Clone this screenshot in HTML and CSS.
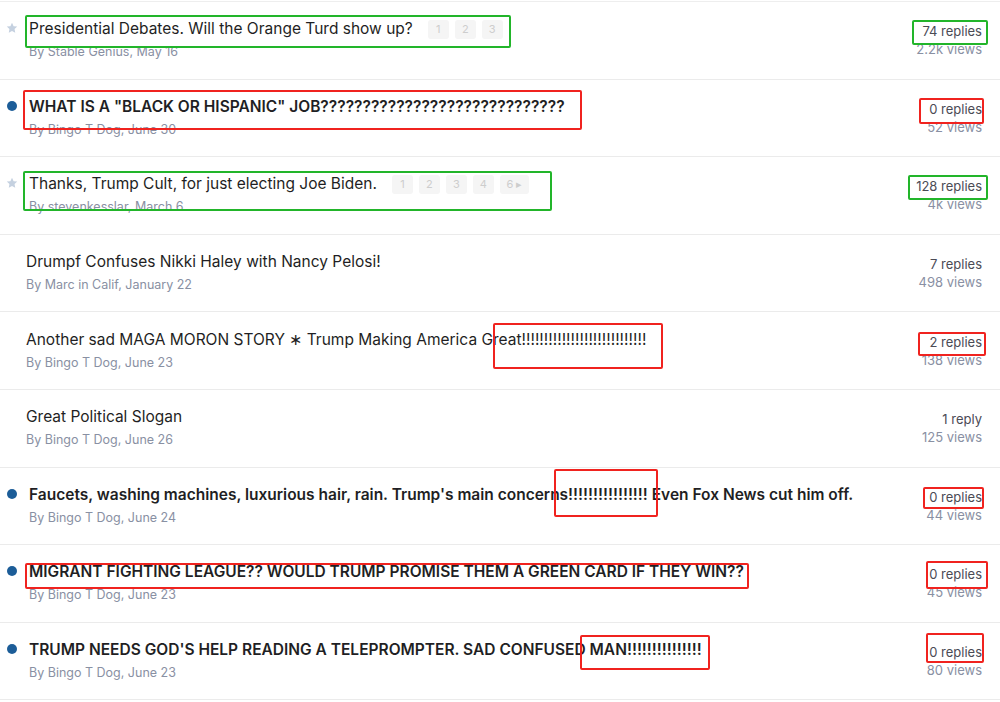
FILE: index.html
```html
<!DOCTYPE html>
<html lang="en">
<head>
    <meta charset="UTF-8">
    <meta name="viewport" content="width=device-width, initial-scale=1.0">
    <title>Topics</title>
    <link rel="stylesheet" href="styles.css">
</head>
<body>
    <div class="topic-list">
        <div class="topic">
            <span class="topic-icon"><svg class="star" viewBox="0 0 24 24"><path d="M12 1.5l3.2 6.8 7.3.9-5.4 5 1.4 7.3L12 17.9l-6.5 3.6 1.4-7.3-5.4-5 7.3-.9z"/></svg></span>
            <div class="topic-main">
                <div class="topic-title">Presidential Debates. Will the Orange Turd show up?
                    <span class="pages"><span>1</span><span>2</span><span>3</span></span>
                </div>
                <div class="topic-meta">By Stable Genius, May 16</div>
            </div>
            <div class="topic-stats"><div class="replies">74 replies</div><div class="views">2.2k views</div></div>
        </div>

        <div class="topic unread">
            <span class="topic-icon"><span class="dot"></span></span>
            <div class="topic-main">
                <div class="topic-title">WHAT IS A "BLACK OR HISPANIC" JOB?????????????????????????????</div>
                <div class="topic-meta">By Bingo T Dog, June 30</div>
            </div>
            <div class="topic-stats"><div class="replies">0 replies</div><div class="views">52 views</div></div>
        </div>

        <div class="topic">
            <span class="topic-icon"><svg class="star" viewBox="0 0 24 24"><path d="M12 1.5l3.2 6.8 7.3.9-5.4 5 1.4 7.3L12 17.9l-6.5 3.6 1.4-7.3-5.4-5 7.3-.9z"/></svg></span>
            <div class="topic-main">
                <div class="topic-title">Thanks, Trump Cult, for just electing Joe Biden.
                    <span class="pages"><span>1</span><span>2</span><span>3</span><span>4</span><span class="last">6 &#9656;</span></span>
                </div>
                <div class="topic-meta">By stevenkesslar, March 6</div>
            </div>
            <div class="topic-stats"><div class="replies">128 replies</div><div class="views">4k views</div></div>
        </div>

        <div class="topic no-icon">
            <div class="topic-main">
                <div class="topic-title">Drumpf Confuses Nikki Haley with Nancy Pelosi!</div>
                <div class="topic-meta">By Marc in Calif, January 22</div>
            </div>
            <div class="topic-stats"><div class="replies">7 replies</div><div class="views">498 views</div></div>
        </div>

        <div class="topic no-icon">
            <div class="topic-main">
                <div class="topic-title">Another sad MAGA MORON STORY &#8727; Trump Making America Great!!!!!!!!!!!!!!!!!!!!!!!!!!!!</div>
                <div class="topic-meta">By Bingo T Dog, June 23</div>
            </div>
            <div class="topic-stats"><div class="replies">2 replies</div><div class="views">138 views</div></div>
        </div>

        <div class="topic no-icon">
            <div class="topic-main">
                <div class="topic-title">Great Political Slogan</div>
                <div class="topic-meta">By Bingo T Dog, June 26</div>
            </div>
            <div class="topic-stats"><div class="replies">1 reply</div><div class="views">125 views</div></div>
        </div>

        <div class="topic unread">
            <span class="topic-icon"><span class="dot"></span></span>
            <div class="topic-main">
                <div class="topic-title">Faucets, washing machines, luxurious hair, rain. Trump's main concerns!!!!!!!!!!!!!!!! Even Fox News cut him off.</div>
                <div class="topic-meta">By Bingo T Dog, June 24</div>
            </div>
            <div class="topic-stats"><div class="replies">0 replies</div><div class="views">44 views</div></div>
        </div>

        <div class="topic unread">
            <span class="topic-icon"><span class="dot"></span></span>
            <div class="topic-main">
                <div class="topic-title">MIGRANT FIGHTING LEAGUE?? WOULD TRUMP PROMISE THEM A GREEN CARD IF THEY WIN??</div>
                <div class="topic-meta">By Bingo T Dog, June 23</div>
            </div>
            <div class="topic-stats"><div class="replies">0 replies</div><div class="views">45 views</div></div>
        </div>

        <div class="topic unread">
            <span class="topic-icon"><span class="dot"></span></span>
            <div class="topic-main">
                <div class="topic-title">TRUMP NEEDS GOD'S HELP READING A TELEPROMPTER. SAD CONFUSED MAN!!!!!!!!!!!!!!!</div>
                <div class="topic-meta">By Bingo T Dog, June 23</div>
            </div>
            <div class="topic-stats"><div class="replies">0 replies</div><div class="views">80 views</div></div>
        </div>

        <!-- highlight boxes drawn over the list -->
        <div class="mark green" style="left:25px;top:13px;width:486px;height:33px"></div>
        <div class="mark green" style="left:912px;top:18px;width:76px;height:25px"></div>
        <div class="mark red" style="left:23px;top:88px;width:559px;height:40px"></div>
        <div class="mark red" style="left:919px;top:96px;width:65px;height:26px"></div>
        <div class="mark green" style="left:23px;top:169px;width:529px;height:40px"></div>
        <div class="mark green" style="left:908px;top:173px;width:80px;height:25px"></div>
        <div class="mark red" style="left:493px;top:321px;width:170px;height:46px"></div>
        <div class="mark red" style="left:918px;top:330px;width:68px;height:24px"></div>
        <div class="mark red" style="left:554px;top:467px;width:104px;height:48px"></div>
        <div class="mark red" style="left:923px;top:485px;width:61px;height:22px"></div>
        <div class="mark red" style="left:25px;top:561px;width:724px;height:26px"></div>
        <div class="mark red" style="left:926px;top:559px;width:62px;height:28px"></div>
        <div class="mark red" style="left:580px;top:633px;width:130px;height:35px"></div>
        <div class="mark red" style="left:926px;top:631px;width:58px;height:30px"></div>
    </div>
</body>
</html>
```

FILE: styles.css
```css
html, body {
    margin: 0;
    padding: 0;
}

body {
    font-family: 'Inter', 'Noto Sans', sans-serif;
    background-color: #fff;
    color: #222;
}

.topic-list {
    position: relative;
    margin-top: 1px;
    border-top: 1px solid #eeeeee;
}

.topic {
    display: flex;
    align-items: center;
    box-sizing: border-box;
    height: 77.6px;
    padding: 0 18px 0 6px;
    border-bottom: 1px solid #ebebeb;
}

.topic.no-icon {
    padding-left: 26px;
}

.topic-icon {
    width: 12px;
    flex: 0 0 12px;
    margin-right: 11px;
    display: flex;
    align-items: center;
    justify-content: center;
    align-self: flex-start;
    margin-top: 20px;
}

.star {
    width: 12px;
    height: 12px;
    fill: #c5d1e0;
}

.dot {
    display: block;
    width: 10px;
    height: 10px;
    border-radius: 50%;
    background-color: #1c5d98;
    margin-top: 1px;
}

.topic-main {
    flex: 1;
    min-width: 0;
}

.topic-title {
    font-size: 15.5px;
    line-height: 20px;
    color: #1f1f24;
    white-space: nowrap;
    display: flex;
    align-items: center;
}

.unread .topic-title {
    font-weight: 600;
}

.topic-meta {
    font-size: 12.5px;
    line-height: 18px;
    margin-top: 4px;
    color: #8990a3;
}

.pages {
    display: inline-flex;
    margin-left: 9px;
}

.pages span {
    display: inline-block;
    min-width: 21px;
    height: 19px;
    line-height: 19px;
    margin-left: 6px;
    border-radius: 3px;
    background-color: #f5f5f5;
    color: #cdcdcd;
    font-size: 11px;
    font-weight: 400;
    text-align: center;
}

.pages span.last {
    min-width: 29px;
}

.topic-stats {
    text-align: right;
    font-size: 13px;
    line-height: 18px;
}

.replies {
    color: #4b4b55;
}

.views {
    color: #8990a3;
}

.mark {
    position: absolute;
    box-sizing: border-box;
    border: 2px solid;
    border-radius: 2px;
    pointer-events: none;
}

.mark.green {
    border-color: #22b52a;
}

.mark.red {
    border-color: #f0231f;
}
```
